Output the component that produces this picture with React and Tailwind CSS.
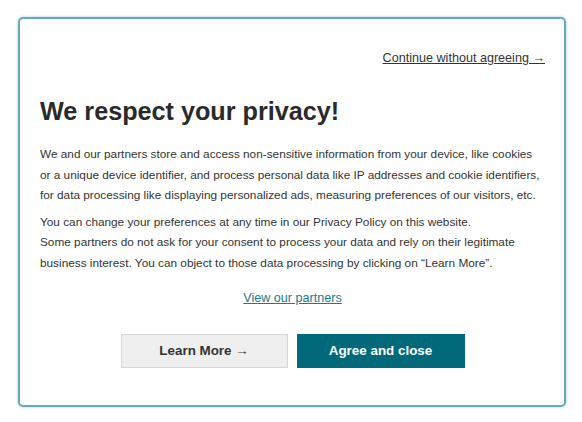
export default function App() {
  return (
    <div className="bg-white w-[582px] h-[422px] pt-[17px] pl-[18px]" style={{ fontFamily: '"Liberation Sans", Arial, sans-serif' }}>
      <div className="w-[548px] h-[390px] border-2 border-[#68a8b4] rounded-[5px] shadow-[0_0_3px_rgba(100,170,185,0.6)] pl-[20px] pr-[19px] pt-[32px] text-[#333333]">
        <div className="flex justify-end h-[15px] items-center">
          <a href="#" className="text-[12.6px] leading-[15px] underline text-[#333333]">Continue without agreeing →</a>
        </div>
        <h1 className="mt-[30px] text-[25.2px] leading-[30px] font-bold text-[#2a2a2a]">We respect your privacy!</h1>
        <p className="mt-[18px] text-[11.8px] leading-[20.5px] whitespace-nowrap">
          We and our partners store and access non-sensitive information from your device, like cookies<br />
          or a unique device identifier, and process personal data like IP addresses and cookie identifiers,<br />
          for data processing like displaying personalized ads, measuring preferences of our visitors, etc.
        </p>
        <p className="mt-[6px] text-[11.8px] leading-[20.5px] whitespace-nowrap">
          You can change your preferences at any time in our Privacy Policy on this website.<br />
          Some partners do not ask for your consent to process your data and rely on their legitimate<br />
          business interest. You can object to those data processing by clicking on “Learn More”.
        </p>
        <div className="mt-[18px] flex justify-center h-[15px] items-center">
          <a href="#" className="text-[12.6px] leading-[15px] underline text-[#1b7a8b]">View our partners</a>
        </div>
        <div className="mt-[28px] flex justify-center gap-[9px]">
          <button className="w-[167px] h-[34px] bg-[#efefef] border border-[#d6d6d6] text-[13.4px] font-bold text-[#333333]">Learn More →</button>
          <button className="w-[168px] h-[34px] bg-[#02697a] text-[13.4px] font-bold text-white">Agree and close</button>
        </div>
      </div>
    </div>
  );
}
